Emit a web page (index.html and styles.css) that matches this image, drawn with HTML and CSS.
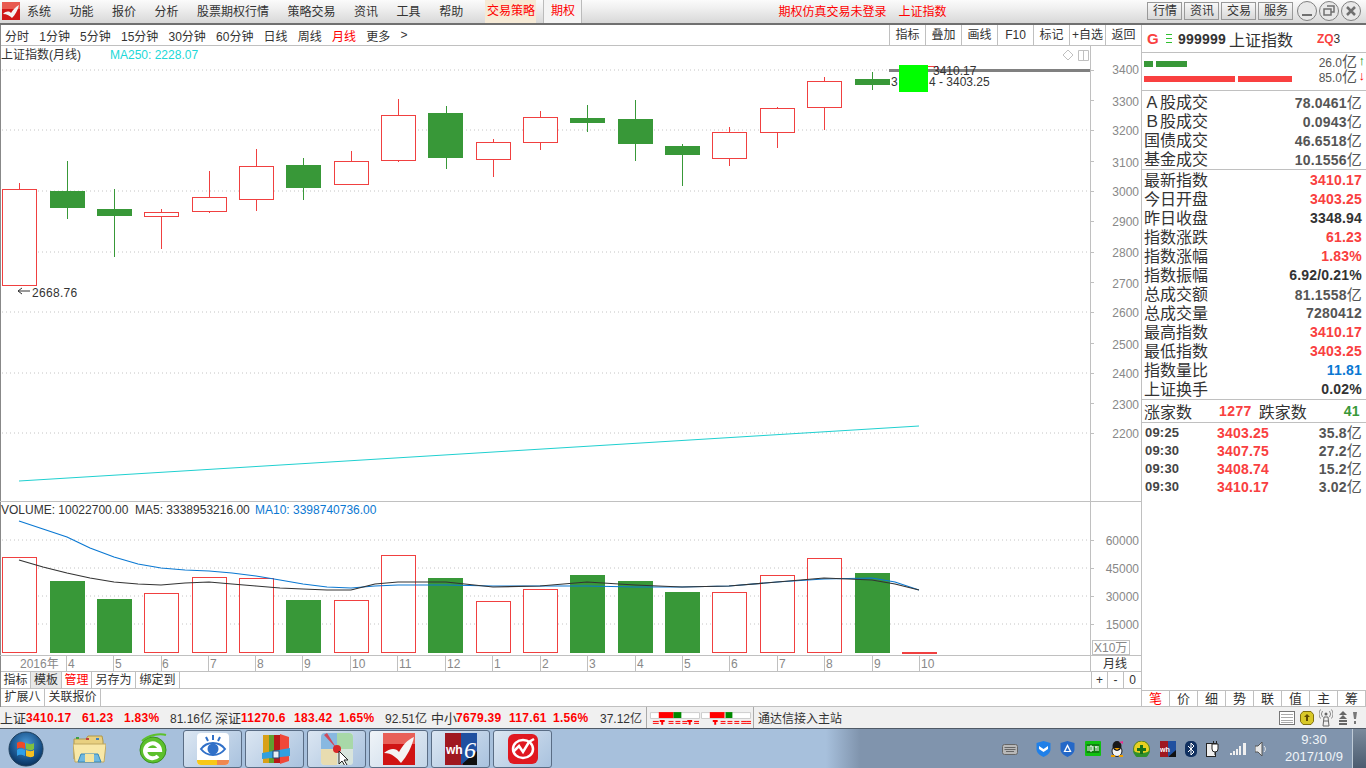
FILE: index.html
```html
<!DOCTYPE html>
<html lang="zh-CN">
<head>
    <meta charset="UTF-8">
    <title>通达信 上证指数</title>
    <link rel="stylesheet" href="styles.css">
</head>
<body>
    <!-- top menu -->
    <div class="topbar">
        <svg class="logo" width="18" height="18" viewBox="0 0 18 18">
            <rect width="18" height="18" fill="#d01818"/>
            <rect width="18" height="7" fill="#e85a50"/>
            <path d="M1 12 C4 9 7 9 9 11 C11 8 13 5 17 3 C16 8 13 13 10 16 C8 14 5 12 1 12Z" fill="#f4f4f4"/>
        </svg>
        <div class="menu">
            <span class="menu-item">系统</span>
            <span class="menu-item">功能</span>
            <span class="menu-item">报价</span>
            <span class="menu-item">分析</span>
            <span class="menu-item">股票期权行情</span>
            <span class="menu-item">策略交易</span>
            <span class="menu-item">资讯</span>
            <span class="menu-item">工具</span>
            <span class="menu-item">帮助</span>
        </div>
        <span class="menu-strategy">交易策略</span>
        <span class="menu-option">期权</span>
        <span class="top-notice">期权仿真交易未登录</span>
        <span class="top-notice top-index">上证指数</span>
        <div class="top-buttons">
            <span class="top-btn">行情</span>
            <span class="top-btn">资讯</span>
            <span class="top-btn">交易</span>
            <span class="top-btn">服务</span>
        </div>
        <div class="win-buttons">
            <svg width="22" height="22" viewBox="0 0 22 22"><circle class="win-circle" cx="11" cy="11" r="9.5"/><rect x="6" y="14" width="10" height="2" fill="#707070"/></svg>
            <svg width="22" height="22" viewBox="0 0 22 22"><circle class="win-circle" cx="11" cy="11" r="9.5"/><path d="M9 6h7v6h-3M6 9h7v6H6z" fill="none" stroke="#707070" stroke-width="1.5"/></svg>
            <svg width="22" height="22" viewBox="0 0 22 22"><circle class="win-circle" cx="11" cy="11" r="9.5"/><path d="M7 7l8 8M15 7l-8 8" stroke="#707070" stroke-width="2.5"/></svg>
        </div>
    </div>

    <div class="workspace">
        <div class="left-col">
            <div class="period-bar">
                <div class="periods">
                    <span>分时</span>
                    <span>1分钟</span>
                    <span>5分钟</span>
                    <span>15分钟</span>
                    <span>30分钟</span>
                    <span>60分钟</span>
                    <span>日线</span>
                    <span>周线</span>
                    <span class="period-on">月线</span>
                    <span>更多</span>
                    <span>&gt;</span>
                </div>
                <div class="chart-tools">
                    <span>指标</span><span>叠加</span><span>画线</span><span>F10</span><span>标记</span><span>+自选</span><span>返回</span>
                </div>
            </div>

            <!-- chart: viewBox keeps page coordinates -->
            <svg class="chart" width="1141" height="625" viewBox="0 46 1141 625">
                <g class="grid">
                    <line x1="2" y1="70" x2="1090" y2="70"/>
                    <line x1="2" y1="130" x2="1090" y2="130"/>
                    <line x1="2" y1="191" x2="1090" y2="191"/>
                    <line x1="2" y1="252" x2="1090" y2="252"/>
                    <line x1="2" y1="312" x2="1090" y2="312"/>
                    <line x1="2" y1="373" x2="1090" y2="373"/>
                    <line x1="2" y1="433" x2="1090" y2="433"/>
                    <line x1="2" y1="540" x2="1090" y2="540"/>
                    <line x1="2" y1="568" x2="1090" y2="568"/>
                    <line x1="2" y1="596" x2="1090" y2="596"/>
                    <line x1="2" y1="624" x2="1090" y2="624"/>
                </g>
                <g class="frame">
                    <line x1="1090.5" y1="46" x2="1090.5" y2="671"/>
                    <line x1="0" y1="501.5" x2="1141" y2="501.5"/>
                    <line x1="0" y1="655.5" x2="1141" y2="655.5"/>
                    <line x1="1090" y1="100.5" x2="1094" y2="100.5"/>
                    <line x1="1090" y1="70.5" x2="1094" y2="70.5"/>
                    <line x1="1090" y1="130.5" x2="1094" y2="130.5"/>
                    <line x1="1090" y1="161.5" x2="1094" y2="161.5"/>
                    <line x1="1090" y1="191.5" x2="1094" y2="191.5"/>
                    <line x1="1090" y1="221.5" x2="1094" y2="221.5"/>
                    <line x1="1090" y1="252.5" x2="1094" y2="252.5"/>
                    <line x1="1090" y1="282.5" x2="1094" y2="282.5"/>
                    <line x1="1090" y1="312.5" x2="1094" y2="312.5"/>
                    <line x1="1090" y1="343.5" x2="1094" y2="343.5"/>
                    <line x1="1090" y1="373.5" x2="1094" y2="373.5"/>
                    <line x1="1090" y1="403.5" x2="1094" y2="403.5"/>
                    <line x1="1090" y1="433.5" x2="1094" y2="433.5"/>
                    <line x1="1090" y1="540.5" x2="1094" y2="540.5"/>
                    <line x1="1090" y1="568.5" x2="1094" y2="568.5"/>
                    <line x1="1090" y1="596.5" x2="1094" y2="596.5"/>
                    <line x1="1090" y1="624.5" x2="1094" y2="624.5"/>
                </g>

                <text class="t-dark" x="1" y="59">上证指数(月线)</text>
                <text class="t-cyan" x="110" y="59">MA250: 2228.07</text>
                <path d="M1068 50l5 5-5 5-5-5z" fill="none" stroke="#c0c0c0"/>
                <path d="M1078.500 50.500h10v10h-10zM1083.500 50.500v10" fill="none" stroke="#c0c0c0"/>

                <!-- red candles -->
                <g class="wick-up">
                    <line x1="19.500" y1="183" x2="19.500" y2="189"/>
                    <line x1="161.500" y1="209" x2="161.500" y2="249"/>
                    <line x1="209.500" y1="171" x2="209.500" y2="213"/>
                    <line x1="256.500" y1="149" x2="256.500" y2="211"/>
                    <line x1="351.500" y1="151" x2="351.500" y2="185"/>
                    <line x1="398.500" y1="99" x2="398.500" y2="162"/>
                    <line x1="493.500" y1="139" x2="493.500" y2="177"/>
                    <line x1="540.500" y1="111" x2="540.500" y2="150"/>
                    <line x1="729.500" y1="127" x2="729.500" y2="166"/>
                    <line x1="777.500" y1="107" x2="777.500" y2="148"/>
                    <line x1="824.500" y1="77" x2="824.500" y2="130"/>
                </g>
                <g class="bar-up">
                    <rect x="2.500" y="189.500" width="34" height="96"/>
                    <rect x="144.500" y="212.500" width="34" height="4"/>
                    <rect x="192.500" y="197.500" width="34" height="14"/>
                    <rect x="239.500" y="166.500" width="34" height="33"/>
                    <rect x="334.500" y="161.500" width="34" height="23"/>
                    <rect x="381.500" y="115.500" width="34" height="45"/>
                    <rect x="476.500" y="142.500" width="34" height="17"/>
                    <rect x="523.500" y="117.500" width="34" height="25"/>
                    <rect x="712.500" y="132.500" width="34" height="26"/>
                    <rect x="760.500" y="108.500" width="34" height="24"/>
                    <rect x="807.500" y="81.500" width="34" height="26"/>
                    <rect x="902.500" y="66.500" width="35" height="3"/>
                </g>
                <!-- green candles -->
                <g class="wick-down">
                    <line x1="67.500" y1="161" x2="67.500" y2="219"/>
                    <line x1="114.500" y1="189" x2="114.500" y2="257"/>
                    <line x1="303.500" y1="158" x2="303.500" y2="200"/>
                    <line x1="446.500" y1="106" x2="446.500" y2="169"/>
                    <line x1="587.500" y1="105" x2="587.500" y2="132"/>
                    <line x1="635.500" y1="100" x2="635.500" y2="161"/>
                    <line x1="682.500" y1="144" x2="682.500" y2="186"/>
                    <line x1="872.500" y1="72" x2="872.500" y2="90"/>
                </g>
                <g class="bar-down">
                    <rect x="50" y="191" width="35" height="17"/>
                    <rect x="97" y="209" width="35" height="7"/>
                    <rect x="286" y="165" width="35" height="23"/>
                    <rect x="428" y="113" width="35" height="45"/>
                    <rect x="570" y="118" width="35" height="5"/>
                    <rect x="618" y="119" width="35" height="25"/>
                    <rect x="665" y="146" width="35" height="9"/>
                    <rect x="855" y="79" width="35" height="6"/>
                </g>

                <polyline class="ma250" points="19,481 919,426"/>
                <path d="M18 291h12M18 291l4-3M18 291l4 3" fill="none" stroke="#333"/>
                <text class="t-dark t-wide" x="32" y="297">2668.76</text>

                <!-- last price marker -->
                <rect x="889" y="69" width="201" height="3" fill="#808080"/>
                <text class="t-dark" x="933" y="75">3410.17</text>
                <text class="t-dark" x="891" y="86">3</text>
                <text class="t-dark" x="929" y="86">4 - 3403.25</text>
                <rect x="899" y="65" width="29" height="27" fill="#00ff00"/>

                <g class="t-axis">
                    <text x="1139" y="74">3400</text>
                    <text x="1139" y="106">3300</text>
                    <text x="1139" y="135">3200</text>
                    <text x="1139" y="167">3100</text>
                    <text x="1139" y="196">3000</text>
                    <text x="1139" y="226">2900</text>
                    <text x="1139" y="257">2800</text>
                    <text x="1139" y="288">2700</text>
                    <text x="1139" y="317">2600</text>
                    <text x="1139" y="349">2500</text>
                    <text x="1139" y="378">2400</text>
                    <text x="1139" y="409">2300</text>
                    <text x="1139" y="438">2200</text>
                    <text x="1139" y="545">60000</text>
                    <text x="1139" y="573">45000</text>
                    <text x="1139" y="601">30000</text>
                    <text x="1139" y="629">15000</text>
                </g>

                <!-- volume -->
                <text class="t-dark" x="1" y="514">VOLUME: 10022700.00</text>
                <text class="t-dark" x="135" y="514">MA5: 3338953216.00</text>
                <text class="t-blue" x="255" y="514">MA10: 3398740736.00</text>

                <g class="bar-up">
                    <rect x="2.500" y="557.500" width="34" height="95"/>
                    <rect x="144.500" y="593.500" width="34" height="59"/>
                    <rect x="192.500" y="577.500" width="34" height="75"/>
                    <rect x="239.500" y="578.500" width="34" height="74"/>
                    <rect x="334.500" y="600.500" width="34" height="52"/>
                    <rect x="381.500" y="555.500" width="34" height="97"/>
                    <rect x="476.500" y="601.500" width="34" height="51"/>
                    <rect x="523.500" y="589.500" width="34" height="63"/>
                    <rect x="712.500" y="592.500" width="34" height="60"/>
                    <rect x="760.500" y="575.500" width="34" height="77"/>
                    <rect x="807.500" y="558.500" width="34" height="94"/>
                </g>
                <g class="bar-down">
                    <rect x="50" y="581" width="35" height="72"/>
                    <rect x="97" y="599" width="35" height="54"/>
                    <rect x="286" y="600" width="35" height="53"/>
                    <rect x="428" y="578" width="35" height="75"/>
                    <rect x="570" y="575" width="35" height="78"/>
                    <rect x="618" y="581" width="35" height="72"/>
                    <rect x="665" y="592" width="35" height="61"/>
                    <rect x="855" y="573" width="35" height="80"/>
                </g>
                <rect x="902" y="652" width="35" height="2" fill="#f04040"/>
                <polyline class="ma-blue" points="19,521 43,529 67,537 90,548 114,557 138,564 161,568 185,570 209,571 232,573 256,576 280,580 303,584 327,587 351,588 375,586 398,585 446,585 493,586 540,586 587,586 635,587 682,587 729,586 777,582 824,579 872,578 895,582 919,590"/>
                <polyline class="ma-black" points="19,560 43,567 67,573 90,578 114,582 138,584 161,585 185,583 209,582 232,584 256,586 280,588 303,589 327,590 351,590 375,584 398,582 446,582 493,587 540,586 587,582 635,585 682,587 729,586 777,582 824,578 872,580 895,584 919,590"/>

                <rect class="unit-box" x="1092.500" y="640.500" width="37" height="14"/>
                <text class="t-unit" x="1094" y="652">X10万</text>

                <!-- time axis -->
                <g class="frame">
                    <line x1="66.500" y1="655" x2="66.500" y2="671"/>
                    <line x1="113.500" y1="655" x2="113.500" y2="671"/>
                    <line x1="161.500" y1="655" x2="161.500" y2="671"/>
                    <line x1="208.500" y1="655" x2="208.500" y2="671"/>
                    <line x1="255.500" y1="655" x2="255.500" y2="671"/>
                    <line x1="302.500" y1="655" x2="302.500" y2="671"/>
                    <line x1="350.500" y1="655" x2="350.500" y2="671"/>
                    <line x1="397.500" y1="655" x2="397.500" y2="671"/>
                    <line x1="445.500" y1="655" x2="445.500" y2="671"/>
                    <line x1="492.500" y1="655" x2="492.500" y2="671"/>
                    <line x1="540.500" y1="655" x2="540.500" y2="671"/>
                    <line x1="587.500" y1="655" x2="587.500" y2="671"/>
                    <line x1="635.500" y1="655" x2="635.500" y2="671"/>
                    <line x1="682.500" y1="655" x2="682.500" y2="671"/>
                    <line x1="729.500" y1="655" x2="729.500" y2="671"/>
                    <line x1="777.500" y1="655" x2="777.500" y2="671"/>
                    <line x1="824.500" y1="655" x2="824.500" y2="671"/>
                    <line x1="872.500" y1="655" x2="872.500" y2="671"/>
                    <line x1="919.500" y1="655" x2="919.500" y2="671"/>
                </g>
                <g class="t-time">
                    <text x="20" y="668">2016年</text>
                    <text x="68" y="668">4</text>
                    <text x="115" y="668">5</text>
                    <text x="162" y="668">6</text>
                    <text x="210" y="668">7</text>
                    <text x="257" y="668">8</text>
                    <text x="304" y="668">9</text>
                    <text x="352" y="668">10</text>
                    <text x="399" y="668">11</text>
                    <text x="447" y="668">12</text>
                    <text x="494" y="668">1</text>
                    <text x="542" y="668">2</text>
                    <text x="589" y="668">3</text>
                    <text x="637" y="668">4</text>
                    <text x="684" y="668">5</text>
                    <text x="731" y="668">6</text>
                    <text x="779" y="668">7</text>
                    <text x="826" y="668">8</text>
                    <text x="874" y="668">9</text>
                    <text x="921" y="668">10</text>
                </g>
                <text class="t-dark" x="1103" y="668">月线</text>
            </svg>

            <div class="tool-row">
                <div class="tool-tabs">
                    <span class="tab-w31">指标</span>
                    <span class="tab-w30 tab-active">模板</span>
                    <span class="tab-w31 tab-red">管理</span>
                    <span class="tab-w44">另存为</span>
                    <span class="tab-w44">绑定到</span>
                </div>
                <div class="zoom-btns"><span>+</span><span>-</span><span>0</span></div>
            </div>
            <div class="ext-row">
                <span class="ext-first">扩展八</span>
                <span class="ext-second">关联报价</span>
            </div>
        </div>

        <!-- quote panel -->
        <aside class="panel">
            <div class="panel-head">
                <span class="g-mark">G</span>
                <span class="g-lines">
                    <i></i><i></i><i></i>
                </span>
                <span class="panel-code">999999</span>
                <span class="panel-name">上证指数</span>
                <span class="panel-zq"><b>ZQ</b>3</span>
            </div>
            <div class="flow">
                <div class="flow-row">
                    <i class="flow-bar green fb-9"></i><i class="flow-bar green fb-31"></i>
                    <span class="flow-val">26.0<em>亿</em></span>
                    <span class="arrow-up">↑</span>
                </div>
                <div class="flow-row">
                    <i class="flow-bar red fb-91"></i><i class="flow-bar red fb-54"></i>
                    <span class="flow-val">85.0<em>亿</em></span>
                    <span class="arrow-down">↓</span>
                </div>
            </div>
            <div class="stat-group stat-first">
                <div class="stat"><span>Ａ股成交</span><b class="grey">78.0461<em>亿</em></b></div>
                <div class="stat"><span>Ｂ股成交</span><b class="grey">0.0943<em>亿</em></b></div>
                <div class="stat"><span>国债成交</span><b class="grey">46.6518<em>亿</em></b></div>
                <div class="stat"><span>基金成交</span><b class="grey">10.1556<em>亿</em></b></div>
            </div>
            <div class="stat-group">
                <div class="stat"><span>最新指数</span><b class="rise">3410.17</b></div>
                <div class="stat"><span>今日开盘</span><b class="rise">3403.25</b></div>
                <div class="stat"><span>昨日收盘</span><b>3348.94</b></div>
                <div class="stat"><span>指数涨跌</span><b class="rise">61.23</b></div>
                <div class="stat"><span>指数涨幅</span><b class="rise">1.83%</b></div>
                <div class="stat"><span>指数振幅</span><b>6.92/0.21%</b></div>
                <div class="stat"><span>总成交额</span><b class="grey">81.1558<em>亿</em></b></div>
                <div class="stat"><span>总成交量</span><b class="grey">7280412</b></div>
                <div class="stat"><span>最高指数</span><b class="rise">3410.17</b></div>
                <div class="stat"><span>最低指数</span><b class="rise">3403.25</b></div>
                <div class="stat"><span>指数量比</span><b class="blue">11.81</b></div>
                <div class="stat"><span>上证换手</span><b>0.02%</b></div>
            </div>
            <div class="updown">
                <span>涨家数</span><b class="rise ud-up">1277</b><span>跌家数</span><b class="fall ud-down">41</b>
            </div>
            <div class="ticks">
                <div class="tick"><b>09:25</b><b class="rise">3403.25</b><b class="grey">35.8<em>亿</em></b></div>
                <div class="tick"><b>09:30</b><b class="rise">3407.75</b><b class="grey">27.2<em>亿</em></b></div>
                <div class="tick"><b>09:30</b><b class="rise">3408.74</b><b class="grey">15.2<em>亿</em></b></div>
                <div class="tick"><b>09:30</b><b class="rise">3410.17</b><b class="grey">3.02<em>亿</em></b></div>
            </div>
            <div class="panel-tabs">
                <span class="tab-red">笔</span><span>价</span><span>细</span><span>势</span><span>联</span><span>值</span><span>主</span><span>筹</span>
            </div>
        </aside>
    </div>

    <!-- status line -->
    <div class="status">
        <span class="st-name st-w26">上证</span><b class="st-w56">3410.17</b><b class="st-w42">61.23</b><b class="st-w46">1.83%</b><span class="st-w45">81.16亿</span>
        <span class="st-name st-w26">深证</span><b class="st-w53">11270.6</b><b class="st-w45">183.42</b><b class="st-w46">1.65%</b><span class="st-w46">92.51亿</span>
        <span class="st-name st-w25">中小</span><b class="st-w53">7679.39</b><b class="st-w44">117.61</b><b class="st-w47">1.56%</b><span class="st-w46">37.12亿</span>
        <svg class="st-meter" width="108" height="21" viewBox="0 0 108 21">
            <path d="M3.500 5.500h50v6h-50zM55.500 5.500h50v6h-50z" fill="#fff" stroke="#ccc"/>
            <rect x="12" y="5" width="15" height="6" fill="#f00"/><rect x="27" y="5" width="8" height="6" fill="#080"/>
            <rect x="64" y="5" width="15" height="6" fill="#f00"/><rect x="80" y="5" width="7" height="6" fill="#080"/>
            <path d="M6 14.500h6M6 16.500h6M22 14.500h5M22 16.500h5M29 14.500h5M29 16.500h5M36 14.500h5M36 16.500h5M48 14.500h5M48 16.500h5M75 14.500h5M75 16.500h5M82 14.500h5M82 16.500h5M89 14.500h5M89 16.500h5M96 14.500h5M96 16.500h5M101 14.500h5M101 16.500h5" stroke="#f00" fill="none"/>
            <path d="M13 13h5v2h-1.500v3h-2v-3H13zM41 13h5v2h-1.500v3h-2v-3H41zM67 13h5v2h-1.500v3h-2v-3H67z" fill="#f00"/>
        </svg>
        <span class="st-server">通达信接入主站</span>
        <div class="st-icons">
            <svg width="16" height="14" viewBox="0 0 16 14"><rect x=".5" y=".5" width="15" height="13" fill="#fff" stroke="#777"/><path d="M2 3.500h12M2 6.500h12M2 9.500h12M2 11.500h12" stroke="#aaa"/></svg>
            <svg width="14" height="14" viewBox="0 0 14 14"><path d="M3 .5h8l2.500 3v7L11 13.500H3L.5 10.500v-7z" fill="#d8c828" stroke="#807010"/><path d="M7 3l3 3H8v4H6V6H4z" fill="#604c00"/></svg>
            <svg width="14" height="18" viewBox="0 0 14 18"><path d="M5 8h4l1 9H4zM5 12h4" fill="none" stroke="#666"/><circle cx="7" cy="5" r="1.500" fill="#666"/><path d="M3.500 2a5 5 0 0 0 0 6M10.500 2a5 5 0 0 1 0 6M1.500 .5a8 8 0 0 0 0 9M12.500 .5a8 8 0 0 1 0 9" fill="none" stroke="#888"/></svg>
            <svg width="10" height="14" viewBox="0 0 10 14"><path d="M5 0l4 4H1zM5 4l4 4H1zM1 9h8v2H1zM1 12h8v2H1z" fill="#666"/></svg>
            <svg width="4" height="14" viewBox="0 0 4 14"><path d="M0 1h4l-1 7H1zM1 10h2v3H1z" fill="#777"/></svg>
        </div>
    </div>

    <!-- windows taskbar -->
    <div class="taskbar">
        <svg class="start-orb" width="36" height="36" viewBox="0 0 36 36">
            <defs>
                <radialGradient id="orb" cx=".5" cy=".35" r=".7"><stop offset="0" stop-color="#4a9ad8"/><stop offset=".7" stop-color="#144a80"/><stop offset="1" stop-color="#0a2a50"/></radialGradient>
            </defs>
            <circle cx="18" cy="18" r="17" fill="url(#orb)" stroke="#20405c"/>
            <path d="M9 12c3-2 5-1 8 0v6c-3-1-5-2-8 0z" fill="#f04a28"/>
            <path d="M18 12c3 1 5 2 8 0v6c-3 2-5 1-8 0z" fill="#80c040"/>
            <path d="M9 19c3-2 5-1 8 0v6c-3-1-5-2-8 0z" fill="#30a0e8"/>
            <path d="M18 19c3 1 5 2 8 0v6c-3 2-5 1-8 0z" fill="#f8c020"/>
        </svg>
        <svg class="pin-folder" width="33" height="30" viewBox="0 0 33 30">
            <path d="M1 5h12l2-3h14l1 5v18H1z" fill="#e8d080" stroke="#b09848"/>
            <path d="M0 10h33l-2 18H2z" fill="#f8e8a8" stroke="#c0a860"/>
            <path d="M8 20h17l3 8H5z" fill="#70b8e0" stroke="#3888b8"/>
            <rect x="12" y="20" width="9" height="8" fill="#f4e4a0"/>
            <rect x="3" y="3" width="3" height="2" fill="#40a040"/><rect x="13" y="4" width="3" height="2" fill="#c04040"/><rect x="23" y="4" width="3" height="2" fill="#4080c0"/>
        </svg>
        <svg class="pin-ie" width="30" height="32" viewBox="0 0 30 32">
            <circle cx="15" cy="17" r="13" fill="#5cc02c" stroke="#3a9020"/>
            <path d="M7 17h15a7.500 7.500 0 1 0-2 6" fill="none" stroke="#fff" stroke-width="4"/>
            <path d="M4 8c6-6 18-8 24-6" fill="none" stroke="#5cc02c" stroke-width="2"/>
        </svg>
        <div class="task-btn">
            <svg width="32" height="32" viewBox="0 0 32 32"><rect width="32" height="32" rx="4" fill="#fff"/><path d="M0 27h20v5H4a4 4 0 0 1-4-4z" fill="#f8c818"/><path d="M20 27h12v1a4 4 0 0 1-4 4h-8z" fill="#f08850"/><path d="M4 16c6-8 18-8 24 0-6 8-18 8-24 0z" fill="#fff" stroke="#3070c8" stroke-width="2"/><circle cx="16" cy="16" r="5.500" fill="#3070c8"/><path d="M9 4l2 4M16 2v5M23 4l-2 4" stroke="#3070c8" stroke-width="2"/></svg>
        </div>
        <div class="task-btn">
            <svg width="32" height="32" viewBox="0 0 32 32"><path d="M4 2h6v28H4z" fill="#d8a018"/><path d="M10 2h5v28h-5z" fill="#60a030"/><path d="M15 2h6v28h-6z" fill="#b81818"/><path d="M21 1l9 3v24l-9 3z" fill="#f04838"/><path d="M3 20l28-5v8L3 26z" fill="#30a0e0"/><rect x="14" y="18" width="6" height="7" fill="#e8eef4" stroke="#204878"/></svg>
        </div>
        <div class="task-btn">
            <svg width="32" height="32" viewBox="0 0 32 32"><rect width="32" height="32" rx="3" fill="#d8e4dc"/><path d="M16 16V0h12a4 4 0 0 1 4 4v12z" fill="#a8d8a8"/><path d="M16 16H0V4a4 4 0 0 1 4-4h12z" fill="#88b8e0"/><path d="M16 16v16H4a4 4 0 0 1-4-4V16z" fill="#e8dcb0"/><path d="M16 16L3 2l3-2z" fill="#d04858"/><circle cx="16" cy="16" r="4" fill="#d82828"/><path d="M18 18v13l3-3 3 5 2-1-3-5h4z" fill="#fff" stroke="#222"/></svg>
        </div>
        <div class="task-btn task-light">
            <svg width="32" height="32" viewBox="0 0 32 32"><rect width="32" height="32" fill="#d01414"/><rect width="32" height="11" fill="#e86058"/><path d="M1 20c6-5 12-5 15-1 4-7 8-12 15-15-2 10-7 19-13 26-4-5-9-10-17-10z" fill="#f4f4f4"/></svg>
        </div>
        <div class="task-btn">
            <svg width="32" height="32" viewBox="0 0 32 32"><rect width="32" height="32" fill="#101010"/><rect width="18" height="32" fill="#a01820"/><path d="M16 0h16v18L16 32z" fill="#2050a0"/><text class="wh6-text" x="1" y="21">wh</text><text class="wh6-six" x="19" y="25">6</text></svg>
        </div>
        <div class="task-btn">
            <svg width="32" height="32" viewBox="0 0 32 32"><rect width="30" height="30" x="1" y="1" rx="6" fill="#e01820"/><ellipse cx="16" cy="16" rx="10" ry="9" fill="none" stroke="#fff" stroke-width="2.500"/><path d="M6 19l6-6 4 6 6-10 5-3" fill="none" stroke="#fff" stroke-width="2.500"/></svg>
        </div>
        <div class="tray">
            <svg class="tray-kb" width="16" height="13" viewBox="0 0 16 13"><rect x=".5" y="2.500" width="15" height="10" rx="2" fill="#b8b8b8" stroke="#666"/><path d="M2.500 5.500h11M2.500 7.500h11M4 9.500h8" stroke="#666"/></svg>
            <svg width="15" height="16" viewBox="0 0 15 16"><path d="M7.500 0l7 2v6c0 4-3 6-7 8-4-2-7-4-7-8V2z" fill="#2080e8"/><path d="M3 5l4.500 3L12 5v3l-4.500 3L3 8z" fill="#fff"/></svg>
            <svg width="15" height="16" viewBox="0 0 15 16"><path d="M7.500 0l7 2v6c0 4-3 6-7 8-4-2-7-4-7-8V2z" fill="#2468c8"/><path d="M7.500 3l4 8h-8z" fill="#fff"/><path d="M7.500 6l2 4h-4z" fill="#2468c8"/></svg>
            <svg width="16" height="15" viewBox="0 0 16 15"><rect width="16" height="15" rx="1" fill="#10c010"/><rect x="1.500" y="3" width="13" height="9" fill="#108010"/><path d="M3 5v5M5 5h2v5H5zM8 5v5M10 5l1 2 1-2M11 7v3M13 5v5" stroke="#fff" fill="none"/></svg>
            <svg width="14" height="16" viewBox="0 0 14 16"><ellipse cx="7" cy="10" rx="5" ry="5.500" fill="#f4f4f4" stroke="#222"/><ellipse cx="7" cy="5" rx="4.500" ry="5" fill="#181818"/><path d="M4 7h6l-3 2z" fill="#f0a000"/><path d="M9 1l4-1v3z" fill="#e83090"/><path d="M1 14h4v2H1zM9 14h4v2H9z" fill="#f0a000"/></svg>
            <svg width="17" height="16" viewBox="0 0 17 16"><circle cx="8.500" cy="8" r="8" fill="#e8d020" stroke="#508020"/><path d="M0 9a8 8 0 0 0 17 0c-2 4-15 4-17 0z" fill="#30902c"/><path d="M7 4h3v3h3v3h-3v3H7v-3H4V7h3z" fill="#187018"/></svg>
            <svg width="16" height="16" viewBox="0 0 16 16"><rect width="16" height="16" fill="#101010"/><rect width="9" height="16" fill="#a01820"/><path d="M8 0h8v9L8 16z" fill="#2050a0"/><text class="wh6-tiny" x="0" y="11">wh</text></svg>
            <svg width="12" height="16" viewBox="0 0 12 16"><rect width="12" height="16" rx="5" fill="#103060"/><path d="M3 5l6 6-3 3V2l3 3-6 6" fill="none" stroke="#fff"/></svg>
            <svg width="14" height="16" viewBox="0 0 14 16"><rect x=".5" y="2.500" width="9" height="13" fill="#eee" stroke="#222"/><path d="M6 3h6v5a3 3 0 0 1-6 0zM7.500 0v3M10.500 0v3M9 11v3" fill="#fff" stroke="#222"/></svg>
            <svg width="16" height="12" viewBox="0 0 16 12"><path d="M0 10h2v2H0zM3 8h2v4H3zM6 6h2v6H6zM9 3h2v9H9zM13 0h3v12h-3z" fill="#f0f0f0"/></svg>
            <svg width="13" height="14" viewBox="0 0 13 14"><path d="M0 4h3l4-4v14l-4-4H0z" fill="#e8e8e8" stroke="#555"/><path d="M9 4a4 4 0 0 1 0 6" fill="none" stroke="#e8e8e8"/></svg>
            <div class="clock"><span>9:30</span><span>2017/10/9</span></div>
            <div class="show-desktop"></div>
        </div>
    </div>
</body>
</html>
```

FILE: styles.css
```css
* {
    box-sizing: border-box;
}
body {
    margin: 0;
    width: 1366px;
    height: 768px;
    overflow: hidden;
    background: #fff;
    color: #333;
    font-family: "Liberation Sans", "Noto Sans CJK SC", sans-serif;
    font-size: 12px;
    display: flex;
    flex-direction: column;
}

/* top menu */
.topbar {
    height: 25px;
    flex: none;
    display: flex;
    align-items: center;
    padding: 0 0 2px 2px;
    border-bottom: 2px solid #707070;
    background: linear-gradient(#fbfbfb, #f0f0f0 35%, #d8d8d8);
}
.logo {
    flex: none;
}
.menu {
    display: flex;
    margin-left: -2px;
    margin-right: 13px;
}
.menu-item {
    padding: 0 9.250px;
    white-space: nowrap;
}
.menu-item:first-child {
    padding-left: 9px;
}
.menu-strategy {
    width: 51px;
    height: 23px;
    line-height: 23px;
    margin-bottom: -2px;
    text-align: center;
    color: #f00;
    background: #f6ead6;
    white-space: nowrap;
}
.menu-option {
    width: 39px;
    height: 23px;
    line-height: 23px;
    margin: 0 0 -2px 7px;
    text-align: center;
    color: #f00;
    background: #f4f4f4;
    border-left: 1px solid #bbb;
    border-right: 1px solid #bbb;
}
.top-notice {
    color: #f00;
    margin-left: 196px;
    white-space: nowrap;
}
.top-index {
    margin-left: 12px;
}
.top-buttons {
    display: flex;
    gap: 2px;
    margin-left: 201px;
}
.top-btn {
    width: 35px;
    height: 18px;
    line-height: 16px;
    text-align: center;
    border: 1px solid #999;
    background: linear-gradient(#f8f8f8, #d8d8d8);
}
.win-buttons {
    display: flex;
    margin-left: 3px;
}
.win-circle {
    fill: #e8e8e8;
    stroke: #808080;
}

/* main area */
.workspace {
    height: 682px;
    flex: none;
    display: flex;
}
.left-col {
    width: 1141px;
    flex: none;
    display: flex;
    flex-direction: column;
    border-left: 1px solid #888;
}
.period-bar {
    height: 21px;
    flex: none;
    display: flex;
    justify-content: space-between;
    border-bottom: 1px solid #c0c0c0;
}
.periods {
    display: flex;
    align-items: center;
    gap: 10.200px;
    padding-left: 4px;
}
.period-on {
    color: #f00;
}
.chart-tools {
    display: flex;
}
.chart-tools span {
    width: 36px;
    line-height: 20px;
    text-align: center;
    white-space: nowrap;
    border-left: 1px solid #c0c0c0;
}
.chart {
    display: block;
    flex: none;
    margin-left: -1px;
    font-size: 12px;
}
.grid line {
    stroke: #c4c4c4;
    stroke-dasharray: 1 3;
}
.frame line {
    stroke: #c0c0c0;
    shape-rendering: crispEdges;
}
.t-dark {
    fill: #333;
}
.t-wide {
    letter-spacing: .3px;
}
.t-cyan {
    fill: #20d8d8;
}
.t-blue {
    fill: #0a78d2;
}
.t-axis text {
    fill: #888;
    text-anchor: end;
}
.t-time text {
    fill: #888;
}
.t-unit {
    fill: #888;
}
.unit-box {
    fill: #fff;
    stroke: #c0c0c0;
    shape-rendering: crispEdges;
}
.wick-up line {
    stroke: #f04040;
    shape-rendering: crispEdges;
}
.wick-down line {
    stroke: #389838;
    shape-rendering: crispEdges;
}
.bar-up rect {
    fill: #fff;
    stroke: #f04040;
    shape-rendering: crispEdges;
}
.bar-down rect {
    fill: #389838;
    shape-rendering: crispEdges;
}
.ma250 {
    fill: none;
    stroke: #20d0d0;
}
.ma-blue {
    fill: none;
    stroke: #0a78d2;
    stroke-width: 1.200;
}
.ma-black {
    fill: none;
    stroke: #333;
    stroke-width: 1.200;
}

/* rows under the chart */
.tool-row {
    height: 18px;
    flex: none;
    display: flex;
    justify-content: space-between;
    border-top: 1px solid #c0c0c0;
    border-bottom: 1px solid #c0c0c0;
}
.tool-tabs {
    display: flex;
}
.tool-tabs span {
    line-height: 16px;
    text-align: center;
    border-right: 1px solid #c0c0c0;
    white-space: nowrap;
}
.tab-w31 {
    width: 30px;
}
.tab-w30 {
    width: 31px;
}
.tab-w44 {
    width: 44px;
}
.tab-active {
    background: #e8e8e8;
}
.tab-red {
    color: #f00;
}
.zoom-btns {
    display: flex;
}
.zoom-btns span {
    width: 16px;
    line-height: 16px;
    text-align: center;
    border-left: 1px solid #c0c0c0;
}
.zoom-btns span:last-child {
    width: 18px;
}
.ext-row {
    height: 18px;
    flex: none;
    display: flex;
    border-bottom: 1px solid #c0c0c0;
}
.ext-row span {
    line-height: 17px;
    text-align: center;
    border-right: 1px solid #c0c0c0;
    white-space: nowrap;
}
.ext-first {
    width: 44px;
}
.ext-second {
    width: 56px;
}

/* quote panel */
.panel {
    width: 225px;
    flex: none;
    display: flex;
    flex-direction: column;
    border-left: 1px solid #c0c0c0;
}
.panel-head {
    height: 28px;
    flex: none;
    display: flex;
    align-items: center;
    padding-left: 5px;
    border-bottom: 1px solid #c0c0c0;
}
.g-mark {
    color: #f94040;
    font-weight: bold;
    font-size: 15px;
    width: 19px;
}
.g-lines {
    width: 6px;
    display: flex;
    flex-direction: column;
    gap: 3px;
}
.g-lines i {
    height: 1px;
    background: #30c030;
}
.panel-code {
    margin-left: 6px;
    font-weight: bold;
    font-size: 14px;
    letter-spacing: .2px;
}
.panel-name {
    margin-left: 3px;
    font-size: 16px;
}
.panel-zq {
    margin-left: 24px;
    font-size: 12px;
}
.panel-zq b {
    color: #f94040;
}
.flow {
    height: 38px;
    flex: none;
    padding-top: 3px;
    border-bottom: 1px solid #c0c0c0;
}
.flow-row {
    height: 15px;
    display: flex;
    align-items: center;
    gap: 3px;
    padding-left: 2px;
    position: relative;
}
.flow-bar {
    height: 6px;
    display: block;
}
.green {
    background: #389838;
}
.red {
    background: #f94040;
}
.fb-9 {
    width: 9px;
}
.fb-31 {
    width: 31px;
}
.fb-91 {
    width: 91px;
}
.fb-54 {
    width: 54px;
}
.flow-val {
    margin-left: auto;
    margin-right: 9px;
    margin-bottom: 6px;
    font-size: 12px;
    color: #555;
}
.flow-val em,
.stat em,
.tick em {
    font-style: normal;
    font-weight: normal;
    font-size: 15px;
}
.arrow-up,
.arrow-down {
    position: absolute;
    right: 1px;
    top: -3px;
    font-weight: bold;
    font-size: 13px;
}
.arrow-up {
    color: #080;
}
.arrow-down {
    color: #f00;
}
.stat-group {
    flex: none;
    border-bottom: 1px solid #c0c0c0;
    padding-top: 1px;
}
.stat-first {
    padding-top: 2px;
}
.stat {
    height: 19px;
    display: flex;
    justify-content: space-between;
    align-items: center;
    padding: 0 4px 0 2px;
}
.stat span {
    font-size: 16px;
    line-height: 19px;
    white-space: nowrap;
}
.stat b {
    font-size: 14px;
    line-height: 19px;
    letter-spacing: .2px;
}
.grey {
    color: #555;
}
.rise {
    color: #f94040;
}
.fall {
    color: #389838;
}
.blue {
    color: #0a78d2;
}
.updown {
    height: 23px;
    flex: none;
    display: flex;
    align-items: center;
    padding-left: 2px;
    font-size: 16px;
    border-bottom: 1px solid #c0c0c0;
}
.updown b {
    font-size: 14px;
    letter-spacing: .4px;
}
.ud-up {
    margin-left: 27px;
    margin-right: 7px;
}
.ud-down {
    margin-left: auto;
    margin-right: 6px;
}
.ticks {
    flex: none;
    padding-top: 1px;
}
.tick {
    height: 18px;
    display: grid;
    grid-template-columns: 72px 72px 1fr;
    align-items: center;
    padding: 0 4px 0 3px;
    font-size: 13px;
}
.tick b {
    font-size: 14px;
    line-height: 18px;
    white-space: nowrap;
    letter-spacing: .2px;
}
.tick b:first-child {
    font-size: 13px;
    color: #444;
}
.tick b:last-child {
    text-align: right;
}
.panel-tabs {
    margin-top: auto;
    height: 17px;
    flex: none;
    display: flex;
    border-top: 1px solid #c0c0c0;
    border-bottom: 1px solid #c0c0c0;
}
.panel-tabs span {
    width: 28px;
    font-size: 13px;
    line-height: 15px;
    text-align: center;
    border-right: 1px solid #c0c0c0;
}

/* status line */
.status {
    height: 21px;
    flex: none;
    display: flex;
    align-items: center;
    background: #f0f0f0;
    white-space: nowrap;
}
.status b {
    color: #f00;
    letter-spacing: .3px;
}
.st-name {
    font-size: 13px;
}
.st-w25 { width: 25px; }
.st-w26 { width: 26px; }
.st-w42 { width: 42px; }
.st-w44 { width: 44px; }
.st-w45 { width: 45px; }
.st-w46 { width: 46px; }
.st-w47 { width: 47px; }
.st-w53 { width: 53px; }
.st-w56 { width: 56px; }
.st-meter {
    flex: none;
    width: 108px;
    border-left: 1px solid #aaa;
    border-right: 1px solid #aaa;
}
.st-server {
    margin-left: 4px;
}
.st-icons {
    margin-left: auto;
    display: flex;
    align-items: center;
    gap: 5px;
    padding-right: 9px;
}

/* taskbar */
.taskbar {
    height: 40px;
    flex: none;
    display: flex;
    align-items: center;
    border-top: 1px solid #505a66;
    background: linear-gradient(90deg, #a7c0dc 826px, #8094ad 860px);
}
.start-orb {
    margin-left: 8px;
    flex: none;
}
.pin-folder {
    margin-left: 29px;
    flex: none;
}
.pin-ie {
    margin-left: 32px;
    margin-right: 15px;
    flex: none;
}
.task-btn {
    width: 59px;
    height: 38px;
    margin-right: 3px;
    flex: none;
    display: flex;
    align-items: center;
    justify-content: center;
    border: 1px solid #5a6d85;
    border-radius: 3px;
    background: linear-gradient(135deg, #dbe6f2, #a9c2de);
}
.task-light {
    background: linear-gradient(135deg, #f0f4f8, #c4d6e8);
}
.wh6-text {
    font-family: "Liberation Sans", sans-serif;
    font-weight: bold;
    font-size: 12px;
    fill: #fff;
}
.wh6-six {
    font-family: "Liberation Serif", serif;
    font-style: italic;
    font-size: 24px;
    fill: #fff;
}
.wh6-tiny {
    font-family: "Liberation Sans", sans-serif;
    font-weight: bold;
    font-size: 7px;
    fill: #fff;
}
.tray {
    margin-left: auto;
    display: flex;
    align-items: center;
    gap: 9.330px;
    height: 100%;
}
.tray-kb {
    margin-right: 8.670px;
}
.clock {
    width: 72px;
    margin-left: .670px;
    display: flex;
    flex-direction: column;
    align-items: center;
    gap: 3px;
    color: #f0f4f8;
    line-height: 14px;
    font-size: 13px;
}
.show-desktop {
    width: 14px;
    height: 100%;
    margin-left: -7.330px;
    background: linear-gradient(#7a8a9c, #4c5c70);
    border-left: 1px solid #c0ccd8;
}
```
